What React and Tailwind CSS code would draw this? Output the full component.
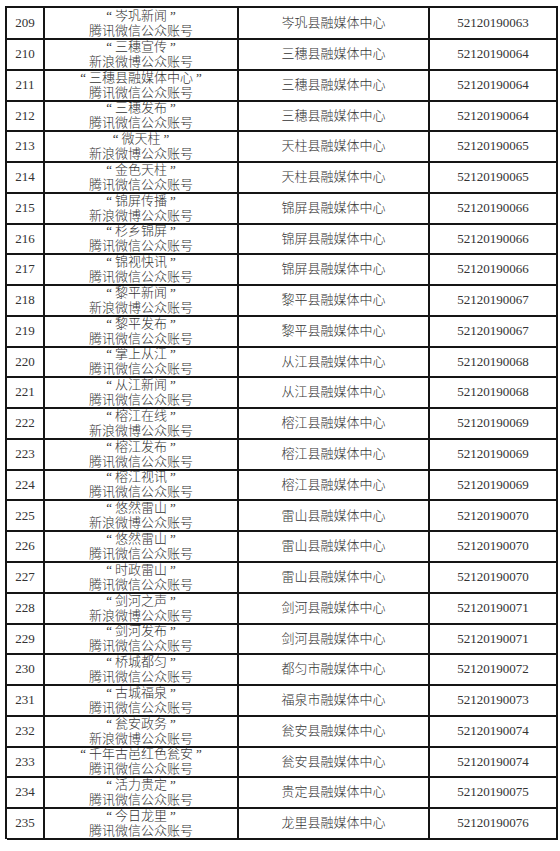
import React from 'react';

const WX = '腾讯微信公众账号';
const WB = '新浪微博公众账号';

const rows = [
  [209, '岑巩新闻', WX, '岑巩县融媒体中心', '52120190063'],
  [210, '三穗宣传', WB, '三穗县融媒体中心', '52120190064'],
  [211, '三穗县融媒体中心', WX, '三穗县融媒体中心', '52120190064'],
  [212, '三穗发布', WX, '三穗县融媒体中心', '52120190064'],
  [213, '微天柱', WB, '天柱县融媒体中心', '52120190065'],
  [214, '金色天柱', WX, '天柱县融媒体中心', '52120190065'],
  [215, '锦屏传播', WB, '锦屏县融媒体中心', '52120190066'],
  [216, '杉乡锦屏', WX, '锦屏县融媒体中心', '52120190066'],
  [217, '锦视快讯', WX, '锦屏县融媒体中心', '52120190066'],
  [218, '黎平新闻', WB, '黎平县融媒体中心', '52120190067'],
  [219, '黎平发布', WX, '黎平县融媒体中心', '52120190067'],
  [220, '掌上从江', WX, '从江县融媒体中心', '52120190068'],
  [221, '从江新闻', WX, '从江县融媒体中心', '52120190068'],
  [222, '榕江在线', WB, '榕江县融媒体中心', '52120190069'],
  [223, '榕江发布', WX, '榕江县融媒体中心', '52120190069'],
  [224, '榕江视讯', WX, '榕江县融媒体中心', '52120190069'],
  [225, '悠然雷山', WB, '雷山县融媒体中心', '52120190070'],
  [226, '悠然雷山', WX, '雷山县融媒体中心', '52120190070'],
  [227, '时政雷山', WX, '雷山县融媒体中心', '52120190070'],
  [228, '剑河之声', WB, '剑河县融媒体中心', '52120190071'],
  [229, '剑河发布', WX, '剑河县融媒体中心', '52120190071'],
  [230, '桥城都匀', WX, '都匀市融媒体中心', '52120190072'],
  [231, '古城福泉', WX, '福泉市融媒体中心', '52120190073'],
  [232, '瓮安政务', WB, '瓮安县融媒体中心', '52120190074'],
  [233, '千年古邑红色瓮安', WX, '瓮安县融媒体中心', '52120190074'],
  [234, '活力贵定', WX, '贵定县融媒体中心', '52120190075'],
  [235, '今日龙里', WX, '龙里县融媒体中心', '52120190076'],
];

const cell = 'flex items-center justify-center border-r-2 border-b-2 border-[#151515]';

export default function App() {
  return (
    <div
      className="h-[851px] w-[560px] bg-white pl-[5px] pt-[6px] text-[13px] font-light text-[#333]"
      style={{ fontFamily: '"Liberation Serif", "Noto Sans CJK SC", serif' }}
    >
      <div className="w-[553px] border-l-2 border-t-2 border-[#151515]">
        {rows.map(([no, name, kind, org, code]) => (
          <div key={no} className="grid h-[30.78px] grid-cols-[38px_194px_191px_128px]">
            <div className={cell}>{no}</div>
            <div className={`${cell} flex-col leading-[15px]`}>
              <span>
                <span className="mr-[3px]">“</span>
                {name}
                <span className="ml-[3px]">”</span>
              </span>
              <span>{kind}</span>
            </div>
            <div className={cell}>{org}</div>
            <div className={cell}>{code}</div>
          </div>
        ))}
      </div>
    </div>
  );
}
